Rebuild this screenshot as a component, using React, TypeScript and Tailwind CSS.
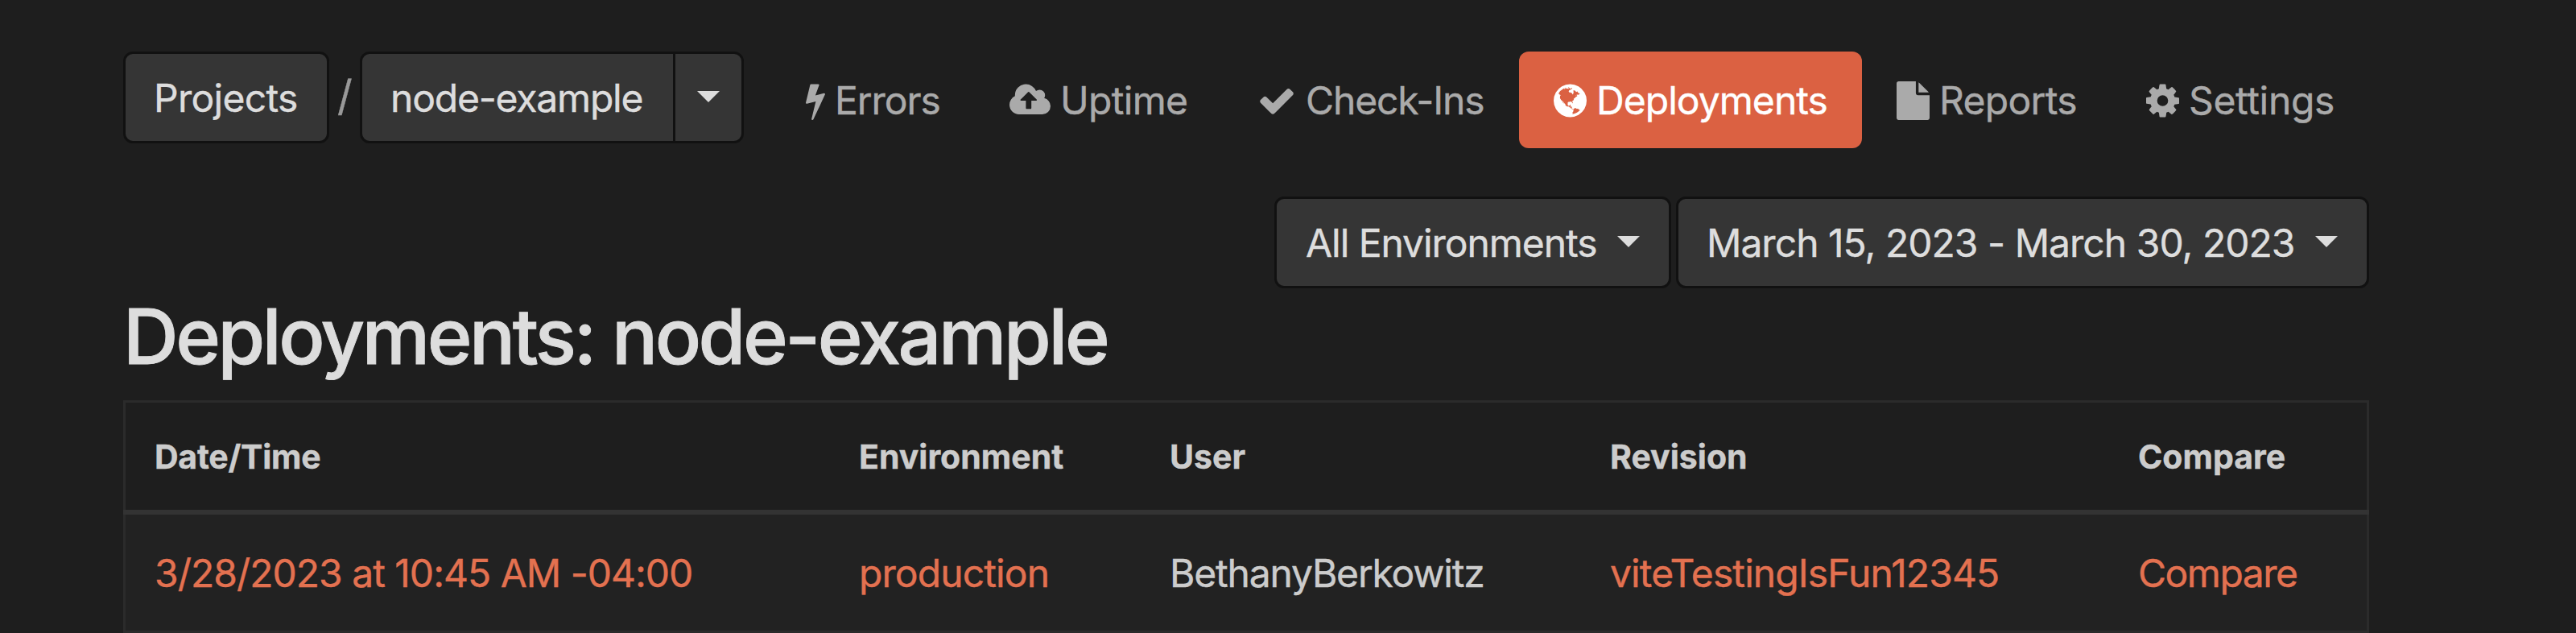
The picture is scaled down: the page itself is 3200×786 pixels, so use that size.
import type { ReactNode } from 'react';

type Glyph = { viewBox: string; path: string };

const bolt: Glyph = {
  viewBox: '448 0 896 1792',
  path: 'M1333 566q18 20 7 44l-540 1157q-13 25-42 25-4 0-14-2-17-5-25.5-19t-4.5-30l197-808-406 101q-4 1-12 1-18 0-31-11-18-16-13-39l201-825q4-14 16-23t28-9h328q19 0 32 12.5t13 29.5q0 8-5 18l-171 463 396-98q8-2 12-2 19 0 34 15z',
};
const cloudUpload: Glyph = {
  viewBox: '64 0 1920 1792',
  path: 'M1344 864q0-14-9-23l-352-352q-9-9-23-9t-23 9l-351 351q-10 12-10 24 0 14 9 23t23 9h224v352q0 13 9.5 22.5t22.5 9.5h192q13 0 22.5-9.5t9.5-22.5v-352h224q13 0 22.5-9.5t9.5-22.5zm640 288q0 159-112.5 271.5t-271.5 112.5h-1088q-185 0-316.5-131.5t-131.5-316.5q0-130 70-240t188-165q-2-30-2-43 0-212 150-362t362-150q156 0 285.5 87t188.5 231q71-62 166-62 106 0 181 75t75 181q0 76-41 138 130 31 213.5 135.5t83.5 238.5z',
};
const check: Glyph = {
  viewBox: '0 0 1792 1792',
  path: 'M1671 566q0 40-28 68l-724 724-136 136q-28 28-68 28t-68-28l-136-136-362-362q-28-28-28-68t28-68l136-136q28-28 68-28t68 28l294 295 656-657q28-28 68-28t68 28l136 136q28 28 28 68z',
};
const globe: Glyph = {
  viewBox: '128 0 1536 1792',
  path: 'M896 128q209 0 385.5 103t279.5 279.5 103 385.5-103 385.5-279.5 279.5-385.5 103-385.5-103-279.5-279.5-103-385.5 103-385.5 279.5-279.5 385.5-103zm274 521q-2 1-9.5 9.5t-13.5 9.5q2 0 4.5-5t5-11 3.5-7q6-7 22-15 14-6 52-12 34-8 51 11-2-2 9.5-13t14.5-12q3-2 15-4.5t15-7.5l2-22q-12 1-17.5-7t-6.5-21q0 2-6 8 0-7-4.5-8t-11.5 1-9 1q-10-3-15-7.5t-8-16.5-4-15q-2-5-9.5-11t-9.5-10q-1-2-2.5-5.5t-3-6.5-4-5.5-5.5-2.5-7 5-7.5 10-4.5 5q-3-2-6-1.5t-4.5 1-4.5 3-5 3.5q-3 2-8.5 3t-8.5 2q15-5-1-11-10-4-16-3 9-4 7.5-12t-8.5-14h5q-1-4-8.5-8.5t-17.5-8.5-13-6q-8-5-34-9.5t-33-.5q-5 6-4.5 10.5t4 14 3.5 12.5q1 6-5.5 13t-6.5 12q0 7 14 15.5t10 21.5q-3 8-16 16t-16 12q-5 8-1.5 18.5t10.5 16.5q2 2 1.5 4t-3.5 4.5-5.5 4-6.5 3.5l-3 2q-11 5-20.5-6t-13.5-26q-7-25-16-30-23-8-29 1-5-13-41-26-25-9-58-4 6-1 0-15-7-15-19-12 3-6 4-17.5t1-13.5q3-13 12-23 1-1 7-8.5t9.5-13.5.5-6q35 4 50-11 5-5 11.5-17t10.5-17q9-6 14-5.5t14.5 5.5 14.5 5q14 1 15.5-11t-7.5-20q12 1 3-17-4-7-8-9-12-4-27 5-8 4 2 8-1-1-9.5 10.5t-16.5 17.5-16-5q-1-1-5.5-13.5t-9.5-13.5q-8 0-16 15 3-8-11-15t-24-8q19-12-8-27-7-4-20.5-5t-19.5 4q-5 7-5.5 11.5t5 8 10.5 5.5 11.5 4 8.5 3q14 10 8 14-2 1-8.5 3.5t-11.5 4.5-6 4q-3 4 0 14t-2 14q-5-5-9-17.5t-7-16.5q7 9-25 6l-10-1q-4 0-16 2t-20.5 1-13.5-8q-4-8 0-20 1-4 4-2-4-3-11-9.5t-10-8.5q-46 15-94 41 6 1 12-1 5-2 13-6.5t10-5.5q34-14 42-7l5-5q14 16 20 25-7-4-30-1-20 6-22 12 7 12 5 18-4-3-11.5-10t-14.5-11-15-5q-16 0-22 1-146 80-235 222 7 7 12 8 4 1 5 9t2.5 11 11.5-3q9 8 3 19 1-1 44 27 19 17 21 21 3 11-10 18-1-2-9-9t-9-4q-3 5 .5 18.5t10.5 12.5q-7 0-9.5 16t-2.5 35.5-1 23.5l2 1q-3 12 5.5 34.5t21.5 19.5q-13 3 20 43 6 8 8 9 3 2 12 7.5t15 10 10 10.5q4 5 10 22.5t14 23.5q-2 6 9.5 20t10.5 23q-1 0-2.5 1t-2.5 1q3 7 15.5 14t15.5 13q1 3 2 10t3 11 8 2q2-20-24-62-15-25-17-29-3-5-5.5-15.5t-4.5-14.5q2 0 6 1.5t8.5 3.5 7.5 4 2 3q-3 7 2 17.5t12 18.5 17 19 12 13q6 6 14 19.5t0 13.5q9 0 20 10.5t17 19.5q5 8 8 26t5 24q2 7 8.5 13.5t12.5 9.5l16 8 13 7q5 2 18.5 10.5t21.5 11.5q10 4 16 4t14.5-2.5 13.5-3.5q15-2 29 15t21 21q36 19 55 11-2 1 .5 7.5t8 15.5 9 14.5 5.5 8.5q5 6 18 15t18 15q6-4 7-9-3 8 7 20t18 10q14-3 14-32-31 15-49-18 0-1-2.5-5.5t-4-8.5-2.5-8.5 0-7.5 5-3q9 0 10-3.5t-2-12.5-4-13q-1-8-11-20t-12-15q-5 9-16 8t-16-9q0 1-1.5 5.5t-1.5 6.5q-13 0-15-1 1-3 2.5-17.5t3.5-22.5q1-4 5.5-12t7.5-14.5 4-12.5-4.5-9.5-17.5-2.5q-19 1-26 20-1 3-3 10.5t-5 11.5-9 7q-7 3-24 2t-24-5q-13-8-22.5-29t-9.5-37q0-10 2.5-26.5t3-25-5.5-24.5q3-2 9-9.5t10-10.5q2-1 4.5-1.5t4.5 0 4-1.5 3-6q-1-1-4-3-3-3-4-3 7 3 28.5-1.5t27.5 1.5q15 11 22-2 0-1-2.5-9.5t-.5-13.5q5 27 29 9 3 3 15.5 5t17.5 5q3 2 7 5.5t5.5 4.5 5-.5 8.5-6.5q10 14 12 24 11 40 19 44 7 3 11 2t4.5-9.5 0-14-1.5-12.5l-1-8v-18l-1-8q-15-3-18.5-12t1.5-18.5 15-18.5q1-1 8-3.5t15.5-6.5 12.5-8q21-19 15-35 7 0 11-9-1 0-5-3t-7.5-5-4.5-2q9-5 2-16 5-3 7.5-11t7.5-10q9 12 21 2 7-8 1-16 5-7 20.5-10.5t18.5-9.5q7 2 8-2t1-12 3-12q4-5 15-9t13-5l17-11q3-4 0-4 18 2 31-11 10-11-6-20 3-6-3-9.5t-15-5.5q3-1 11.5-.5t10.5-1.5q15-10-7-16-17-5-43 12zm-163 877q206-36 351-189-3-3-12.5-4.5t-12.5-3.5q-18-7-24-8 1-7-2.5-13t-8-9-12.5-8-11-7q-2-2-7-6t-7-5.5-7.5-4.5-8.5-2-10 1l-3 1q-3 1-5.5 2.5t-5.5 3-4 3 0 2.5q-21-17-36-22-5-1-11-5.5t-10.5-7-10-1.5-11.5 7q-5 5-6 15t-2 13q-7-5 0-17.5t2-18.5q-3-6-10.5-4.5t-12 4.5-11.5 8.5-9 6.5-8.5 5.5-8.5 7.5q-3 4-6 12t-5 11q-2-4-11.5-6.5t-9.5-5.5q2 10 4 35t5 38q7 31-12 48-27 25-29 40-4 22 12 26 0 7-8 20.5t-7 21.5q0 6 2 16z',
};
const file: Glyph = {
  viewBox: '128 0 1536 1792',
  path: 'M1152 512v-472q22 14 36 28l408 408q14 14 28 36h-472zm-128 32q0 40 28 68t68 28h544v1056q0 40-28 68t-68 28h-1344q-40 0-68-28t-28-68v-1600q0-40 28-68t68-28h800v544z',
};
const cog: Glyph = {
  viewBox: '128 0 1536 1792',
  path: 'M1152 896q0-106-75-181t-181-75-181 75-75 181 75 181 181 75 181-75 75-181zm512-109v222q0 12-8 23t-20 13l-185 28q-19 54-39 91 35 50 107 138 10 12 10 25t-9 23q-27 37-99 108t-94 71q-12 0-26-9l-138-108q-44 23-91 38-16 136-29 186-7 28-36 28h-222q-14 0-24.5-8.5t-11.5-21.5l-28-184q-49-16-90-37l-141 107q-10 9-25 9-14 0-25-11-126-114-165-168-7-10-7-23 0-12 8-23 15-21 51-66.5t54-70.5q-27-50-41-99l-183-27q-13-2-21-12.5t-8-23.5v-222q0-12 8-23t19-13l186-28q14-46 39-92-40-57-107-138-10-12-10-24 0-10 9-23 26-36 98.5-107.5t94.5-71.5q13 0 26 10l138 107q44-23 91-38 16-136 29-186 7-28 36-28h222q14 0 24.5 8.5t11.5 21.5l28 184q49 16 90 37l142-107q9-9 24-9 13 0 25 10 129 119 165 170 7 8 7 22 0 12-8 23-15 21-51 66.5t-54 70.5q26 50 41 98l183 28q13 2 21 12.5t8 23.5z',
};

const tabs: { label: string; glyph: Glyph; icon: string; box: string; active?: boolean }[] = [
  { label: 'Errors', glyph: bolt, icon: 'w-6', box: 'w-[253px] tracking-[-1.05px]' },
  { label: 'Uptime', glyph: cloudUpload, icon: 'w-[51px]', box: 'w-[308px] tracking-[-0.7px]' },
  { label: 'Check-Ins', glyph: check, icon: 'w-12', box: 'w-[368px] tracking-[-1.15px]' },
  { label: 'Deployments', glyph: globe, icon: 'w-[41px]', box: 'w-[426px] tracking-[-0.95px]', active: true },
  { label: 'Reports', glyph: file, icon: 'w-[41px]', box: 'w-[310px] tracking-[-0.7px]' },
  { label: 'Settings', glyph: cog, icon: 'w-[41px]', box: 'w-[320px] tracking-[-0.35px]' },
];

function Tab({ label, glyph, icon, box, active }: (typeof tabs)[number]) {
  return (
    <a
      className={`flex h-[120px] shrink-0 items-center gap-3 rounded-xl pt-0.5 pl-[43px] whitespace-nowrap ${box} ${
        active ? 'bg-[#db6142] text-white' : 'text-[#aaaaaa]'
      }`}
    >
      <svg viewBox={glyph.viewBox} className={`h-12 shrink-0 fill-current ${icon}`}>
        <path d={glyph.path} />
      </svg>
      <span>{label}</span>
    </a>
  );
}

function Caret() {
  return (
    <svg viewBox="0 0 28 14" className="mb-[3px] h-3.5 w-7 shrink-0 fill-current">
      <path d="M0 0h28L14 14z" />
    </svg>
  );
}

function Button({ className, children }: { className: string; children: ReactNode }) {
  return (
    <button
      className={`flex h-[114px] shrink-0 items-center border-[3px] border-[#111111] bg-[#353535] pt-px whitespace-nowrap text-[#dddddd] ${className}`}
    >
      {children}
    </button>
  );
}

const grid = 'grid grid-cols-[875px_386px_547px_656px_320px] items-center';

export default function App() {
  return (
    <div className="h-[786px] w-[3200px] overflow-hidden bg-[#1e1e1e] pt-16 pl-[153px] font-['Inter',sans-serif] text-[48px] leading-[58px] [-webkit-text-stroke:0.4px_currentColor]">
      <div className="w-[2790px]">
        <header className="flex items-start">
          <Button className="w-64 rounded-xl pl-[35px] tracking-[-0.7px]">Projects</Button>
          <span className="w-[38px] pt-[26px] pl-[10px] text-[52px] text-[#999999]">/</span>
          <Button className="w-[392px] rounded-l-xl pl-[35px] tracking-[-1.2px]">node-example</Button>
          <Button className="-ml-[3px] w-[88px] justify-center rounded-r-xl">
            <Caret />
          </Button>
          <nav className="ml-[34px] flex">
            {tabs.map((tab) => (
              <Tab key={tab.label} {...tab} />
            ))}
          </nav>
        </header>

        <div className="mt-[60px] flex justify-end gap-1.5">
          <Button className="w-[493px] justify-between rounded-xl px-9 tracking-[-1.05px]">
            All Environments
            <Caret />
          </Button>
          <Button className="w-[861px] justify-between rounded-xl pr-9 pl-[35px] tracking-[-0.97px]">
            March 15, 2023 - March 30, 2023
            <Caret />
          </Button>
        </div>

        <h1 className="mt-[7px] h-[132px] text-[95px] leading-[106px] font-medium tracking-[-3.42px] text-[#dddddd] [-webkit-text-stroke:0.9px_currentColor]">
          Deployments: node-example
        </h1>

        <section className="border-[3px] border-[#2b2b2b] whitespace-nowrap">
          <div className={`h-[133px] text-[41px] font-bold text-[#cccccc] ${grid}`}>
            <span className="pl-9 tracking-[-0.25px]">Date/Time</span>
            <span className="pl-9">Environment</span>
            <span className="pl-9">User</span>
            <span className="pl-9">Revision</span>
            <span className="pl-9">Compare</span>
          </div>
          <div className="-mx-[3px] h-1.5 bg-[#333333]" />
          <div className={`h-36 bg-[#222222] pt-px text-[#e37150] ${grid}`}>
            <a className="pl-9 tracking-[-1px]">3/28/2023 at 10:45 AM -04:00</a>
            <a className="pl-9 tracking-[-0.9px]">production</a>
            <span className="pl-9 tracking-[-1.2px] text-[#cccccc]">BethanyBerkowitz</span>
            <a className="pl-9 tracking-[-0.9px]">viteTestingIsFun12345</a>
            <a className="pl-9 tracking-[-1.5px]">Compare</a>
          </div>
        </section>
      </div>
    </div>
  );
}
